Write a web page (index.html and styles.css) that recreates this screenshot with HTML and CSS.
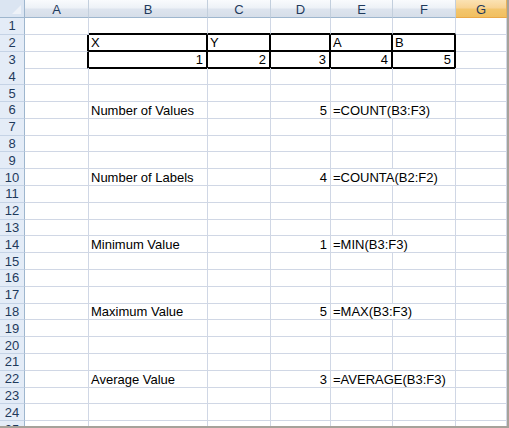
FILE: index.html
```html
<!DOCTYPE html>
<html>
<head>
<meta charset="utf-8">
<link rel="stylesheet" href="styles.css">
</head>
<body>
<div class="sheet">
  <div class="row hdr">
    <div class="corner"><svg class="tri" width="24" height="17" viewBox="0 0 24 17"><polygon points="12,14 21,14 21,5" fill="#eef2f8"/></svg></div>
    <div class="hc">A</div><div class="hc">B</div><div class="hc">C</div><div class="hc">D</div><div class="hc">E</div><div class="hc">F</div><div class="hc sel">G</div>
  </div>
  <div class="row"><div class="rh">1</div><div class="c"></div><div class="c tb"></div><div class="c tb"></div><div class="c tb"></div><div class="c tb"></div><div class="c tb"></div><div class="c"></div></div>
  <div class="row"><div class="rh">2</div><div class="c tl"></div><div class="c t">X</div><div class="c t">Y</div><div class="c t"></div><div class="c t">A</div><div class="c t">B</div><div class="c"></div></div>
  <div class="row"><div class="rh">3</div><div class="c tl"></div><div class="c t r">1</div><div class="c t r">2</div><div class="c t r">3</div><div class="c t r">4</div><div class="c t r">5</div><div class="c"></div></div>
  <div class="row"><div class="rh">4</div><div class="c"></div><div class="c"></div><div class="c"></div><div class="c"></div><div class="c"></div><div class="c"></div><div class="c"></div></div>
  <div class="row"><div class="rh">5</div><div class="c"></div><div class="c"></div><div class="c"></div><div class="c"></div><div class="c"></div><div class="c"></div><div class="c"></div></div>
  <div class="row"><div class="rh">6</div><div class="c"></div><div class="c">Number of Values</div><div class="c"></div><div class="c r">5</div><div class="c span2">=COUNT(B3:F3)</div><div class="c"></div></div>
  <div class="row"><div class="rh">7</div><div class="c"></div><div class="c"></div><div class="c"></div><div class="c"></div><div class="c"></div><div class="c"></div><div class="c"></div></div>
  <div class="row"><div class="rh">8</div><div class="c"></div><div class="c"></div><div class="c"></div><div class="c"></div><div class="c"></div><div class="c"></div><div class="c"></div></div>
  <div class="row"><div class="rh">9</div><div class="c"></div><div class="c"></div><div class="c"></div><div class="c"></div><div class="c"></div><div class="c"></div><div class="c"></div></div>
  <div class="row"><div class="rh">10</div><div class="c"></div><div class="c">Number of Labels</div><div class="c"></div><div class="c r">4</div><div class="c span2">=COUNTA(B2:F2)</div><div class="c"></div></div>
  <div class="row"><div class="rh">11</div><div class="c"></div><div class="c"></div><div class="c"></div><div class="c"></div><div class="c"></div><div class="c"></div><div class="c"></div></div>
  <div class="row"><div class="rh">12</div><div class="c"></div><div class="c"></div><div class="c"></div><div class="c"></div><div class="c"></div><div class="c"></div><div class="c"></div></div>
  <div class="row"><div class="rh">13</div><div class="c"></div><div class="c"></div><div class="c"></div><div class="c"></div><div class="c"></div><div class="c"></div><div class="c"></div></div>
  <div class="row"><div class="rh">14</div><div class="c"></div><div class="c">Minimum Value</div><div class="c"></div><div class="c r">1</div><div class="c span2">=MIN(B3:F3)</div><div class="c"></div></div>
  <div class="row"><div class="rh">15</div><div class="c"></div><div class="c"></div><div class="c"></div><div class="c"></div><div class="c"></div><div class="c"></div><div class="c"></div></div>
  <div class="row"><div class="rh">16</div><div class="c"></div><div class="c"></div><div class="c"></div><div class="c"></div><div class="c"></div><div class="c"></div><div class="c"></div></div>
  <div class="row"><div class="rh">17</div><div class="c"></div><div class="c"></div><div class="c"></div><div class="c"></div><div class="c"></div><div class="c"></div><div class="c"></div></div>
  <div class="row"><div class="rh">18</div><div class="c"></div><div class="c">Maximum Value</div><div class="c"></div><div class="c r">5</div><div class="c span2">=MAX(B3:F3)</div><div class="c"></div></div>
  <div class="row"><div class="rh">19</div><div class="c"></div><div class="c"></div><div class="c"></div><div class="c"></div><div class="c"></div><div class="c"></div><div class="c"></div></div>
  <div class="row"><div class="rh">20</div><div class="c"></div><div class="c"></div><div class="c"></div><div class="c"></div><div class="c"></div><div class="c"></div><div class="c"></div></div>
  <div class="row"><div class="rh">21</div><div class="c"></div><div class="c"></div><div class="c"></div><div class="c"></div><div class="c"></div><div class="c"></div><div class="c"></div></div>
  <div class="row"><div class="rh">22</div><div class="c"></div><div class="c">Average Value</div><div class="c"></div><div class="c r">3</div><div class="c span2">=AVERAGE(B3:F3)</div><div class="c"></div></div>
  <div class="row"><div class="rh">23</div><div class="c"></div><div class="c"></div><div class="c"></div><div class="c"></div><div class="c"></div><div class="c"></div><div class="c"></div></div>
  <div class="row"><div class="rh">24</div><div class="c"></div><div class="c"></div><div class="c"></div><div class="c"></div><div class="c"></div><div class="c"></div><div class="c"></div></div>
  <div class="row"><div class="rh">25</div><div class="c"></div><div class="c"></div><div class="c"></div><div class="c"></div><div class="c"></div><div class="c"></div><div class="c"></div></div>
</div>
</body>
</html>
```

FILE: styles.css
```css
html, body {
  margin: 0;
  padding: 0;
  background: #fff;
}
* { box-sizing: border-box; }

.sheet {
  width: 509px;
  height: 428px;
  overflow: hidden;
  border-right: 2px solid #a6a29a;
  border-bottom: 2px solid #a6a29a;
  font-family: "Liberation Sans", Arial, sans-serif;
  background: #fff;
}

.row {
  display: grid;
  grid-template-columns: 25px 64px 119px 63px 60px 62px 63px 1fr;
  height: 16.8px;
}
.row.hdr { height: 18px; }

.corner {
  position: relative;
  background: #dbe5f2;
  border-right: 1px solid #9eb6ce;
  border-bottom: 1px solid #9eb6ce;
}
.tri { position: absolute; left: 0; top: 0; }

.hc {
  background: linear-gradient(#f9fbfd 0%, #eef2f7 45%, #dde4ee 55%, #d6dee9 100%);
  border-right: 1px solid #c3cfdd;
  border-bottom: 1px solid #9eb6ce;
  color: #1f3a5c;
  font-size: 13px;
  display: flex;
  align-items: center;
  justify-content: center;
  padding-top: 2px;
}
.hc.sel {
  background: linear-gradient(#fbe2b3 0%, #f8d495 45%, #f3c66e 55%, #f1bf60 100%);
  border-right-color: #e9b25a;
  border-bottom: 1px solid #eaa848;
}

.rh {
  background: #e4ecf7;
  border-right: 1px solid #9eb6ce;
  border-bottom: 1px solid #c5d3e6;
  color: #1f3a5c;
  font-size: 13px;
  display: flex;
  align-items: center;
  justify-content: center;
}

.c {
  border-right: 1px solid #d0d7e5;
  border-bottom: 1px solid #d0d7e5;
  font-size: 13px;
  line-height: 15px;
  color: #000;
  display: flex;
  align-items: flex-end;
  padding: 0 2px;
  white-space: nowrap;
}
.c.r { justify-content: flex-end; padding-right: 3px; }
.c.span2 { grid-column: span 2; }

.c.t {
  border-right: 2px solid #000;
  border-bottom: 2px solid #000;
}
.c.tb { border-bottom: 2px solid #000; }
.c.tl { border-right: 2px solid #000; }
```
